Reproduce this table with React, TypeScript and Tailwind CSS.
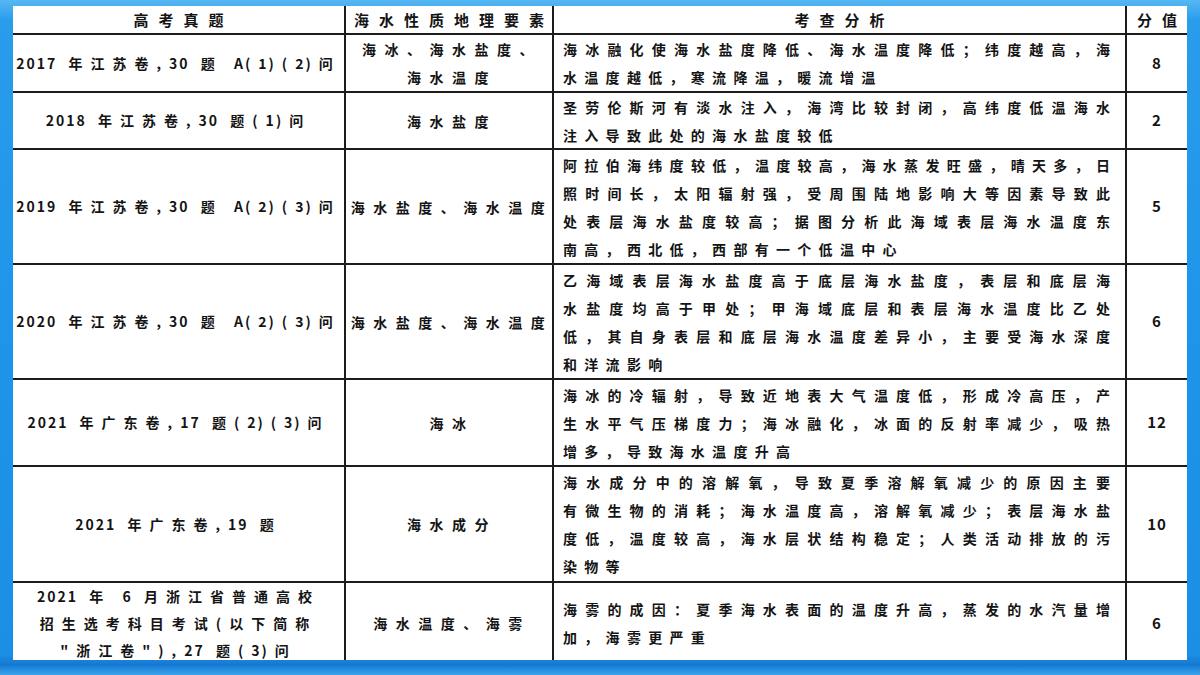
import React from 'react';

type Row = {
  exam: string[];
  factor: string[];
  analysis: string[];
  score: string;
  top?: boolean;
};

const rows: Row[] = [
  {
    exam: ['2017 年江苏卷,30 题 A(1)(2)问'],
    factor: ['海冰、海水盐度、', '海水温度'],
    analysis: ['海冰融化使海水盐度降低、海水温度降低；纬度越高，海', '水温度越低，寒流降温，暖流增温'],
    score: '8',
  },
  {
    exam: ['2018 年江苏卷,30 题(1)问'],
    factor: ['海水盐度'],
    analysis: ['圣劳伦斯河有淡水注入，海湾比较封闭，高纬度低温海水', '注入导致此处的海水盐度较低'],
    score: '2',
  },
  {
    exam: ['2019 年江苏卷,30 题 A(2)(3)问'],
    factor: ['海水盐度、海水温度'],
    analysis: [
      '阿拉伯海纬度较低，温度较高，海水蒸发旺盛，晴天多，日',
      '照时间长，太阳辐射强，受周围陆地影响大等因素导致此',
      '处表层海水盐度较高；据图分析此海域表层海水温度东',
      '南高，西北低，西部有一个低温中心',
    ],
    score: '5',
  },
  {
    exam: ['2020 年江苏卷,30 题 A(2)(3)问'],
    factor: ['海水盐度、海水温度'],
    analysis: [
      '乙海域表层海水盐度高于底层海水盐度，表层和底层海',
      '水盐度均高于甲处；甲海域底层和表层海水温度比乙处',
      '低，其自身表层和底层海水温度差异小，主要受海水深度',
      '和洋流影响',
    ],
    score: '6',
  },
  {
    exam: ['2021 年广东卷,17 题(2)(3)问'],
    factor: ['海冰'],
    analysis: [
      '海冰的冷辐射，导致近地表大气温度低，形成冷高压，产',
      '生水平气压梯度力；海冰融化，冰面的反射率减少，吸热',
      '增多，导致海水温度升高',
    ],
    score: '12',
  },
  {
    exam: ['2021 年广东卷,19 题'],
    factor: ['海水成分'],
    analysis: [
      '海水成分中的溶解氧，导致夏季溶解氧减少的原因主要',
      '有微生物的消耗；海水温度高，溶解氧减少；表层海水盐',
      '度低，温度较高，海水层状结构稳定；人类活动排放的污',
      '染物等',
    ],
    score: '10',
  },
  {
    exam: ['2021 年 6 月浙江省普通高校', '招生选考科目考试(以下简称', '"浙江卷"),27 题(3)问'],
    factor: ['海水温度、海雾'],
    analysis: ['海雾的成因：夏季海水表面的温度升高，蒸发的水汽量增', '加，海雾更严重'],
    score: '6',
    top: true,
  },
];

const headers = ['高考真题', '海水性质地理要素', '考查分析', '分值'];

// digits / latin sit tight, CJK and punctuation get wide spacing
function Spaced({ text }: { text: string }) {
  const parts = text.split(/([0-9A-Za-z]+)/).filter((p) => p !== '');
  return (
    <div>
      {parts.map((p, i) =>
        /^[0-9A-Za-z]+$/.test(p) ? (
          <span key={i} className="tracking-[2px]">
            {p}
          </span>
        ) : (
          <span key={i} className="tracking-[8px]">
            {p}
          </span>
        )
      )}
    </div>
  );
}

export default function App() {
  return (
    <div className="w-[1200px] h-[675px] overflow-hidden bg-[linear-gradient(180deg,#56b8f3_0%,#2a9cec_3%,#1d95e9_50%,#1b8fe4_97%,#1678d2_98.5%,#3aa6ee_100%)] px-[13px] pt-[6px] font-['Noto_Sans_CJK_SC','Noto_Sans',sans-serif] font-bold text-[#141414]">
      <div className="h-[654px] overflow-hidden">
        <div className="grid grid-cols-[331px_206px_571px_60px] grid-rows-[27px_56px_55px_113px_113px_85px_114px_80px] gap-[2px] bg-[#1c1c1c]">
          {headers.map((h) => (
            <div
              key={h}
              className="bg-white flex items-center justify-center pl-[10px] text-[15px] leading-none tracking-[10px] whitespace-nowrap"
            >
              {h}
            </div>
          ))}

          {rows.map((row, i) => (
            <React.Fragment key={i}>
              <div
                className={`bg-white flex flex-col items-center text-[14px] leading-[27px] whitespace-nowrap ${
                  row.top ? 'justify-start' : 'justify-center'
                }`}
              >
                {row.exam.map((line) => (
                  <Spaced key={line} text={line} />
                ))}
              </div>

              <div className="bg-white flex flex-col items-center justify-center text-[14px] leading-[28px] tracking-[8.5px] whitespace-nowrap pl-[6px]">
                {row.factor.map((line) => (
                  <div key={line}>{line}</div>
                ))}
              </div>

              <div className="bg-white flex flex-col justify-center pl-[9px] pr-[12px] text-[14px] leading-[28px]">
                {row.analysis.map((line, j) => {
                  const last = j === row.analysis.length - 1;
                  return last ? (
                    <div key={j} className="tracking-[7.3px] whitespace-nowrap">
                      {line}
                    </div>
                  ) : (
                    <div key={j} className="tracking-[3px] text-justify [text-align-last:justify]">
                      {line}
                    </div>
                  );
                })}
              </div>

              <div className="bg-white flex items-center justify-center text-[15px] tracking-[1px]">
                {row.score}
              </div>
            </React.Fragment>
          ))}
        </div>
      </div>
    </div>
  );
}
